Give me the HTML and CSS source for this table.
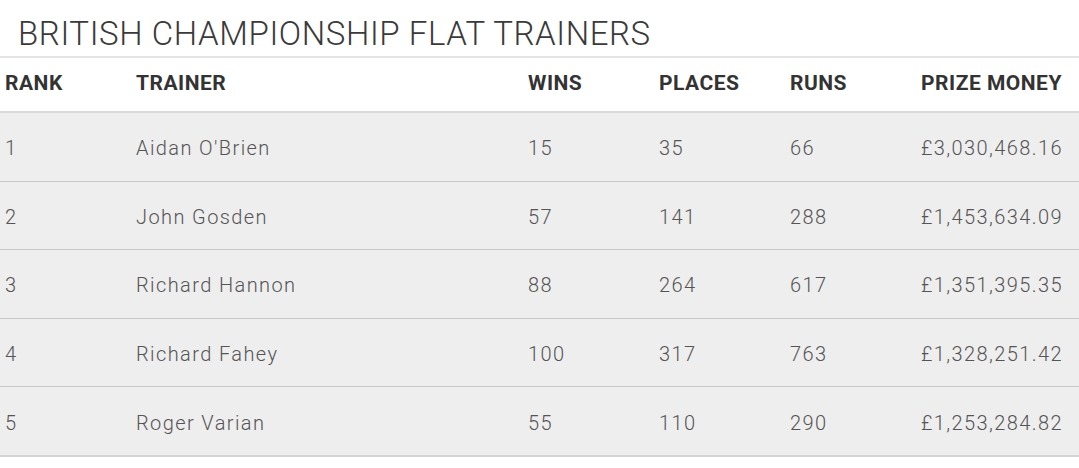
FILE: index.html
```html
<!DOCTYPE html>
<html>
<head>
<meta charset="utf-8">
<link rel="stylesheet" href="styles.css">
</head>
<body>
<h1 class="title">BRITISH CHAMPIONSHIP FLAT TRAINERS</h1>
<table class="standings">
  <colgroup>
    <col class="c-rank"><col class="c-trainer"><col class="c-num"><col class="c-num"><col class="c-num"><col class="c-prize">
  </colgroup>
  <thead>
    <tr><th>RANK</th><th>TRAINER</th><th>WINS</th><th>PLACES</th><th>RUNS</th><th>PRIZE MONEY</th></tr>
  </thead>
  <tbody>
    <tr><td>1</td><td>Aidan O'Brien</td><td>15</td><td>35</td><td>66</td><td>£3,030,468.16</td></tr>
    <tr><td>2</td><td>John Gosden</td><td>57</td><td>141</td><td>288</td><td>£1,453,634.09</td></tr>
    <tr><td>3</td><td>Richard Hannon</td><td>88</td><td>264</td><td>617</td><td>£1,351,395.35</td></tr>
    <tr><td>4</td><td>Richard Fahey</td><td>100</td><td>317</td><td>763</td><td>£1,328,251.42</td></tr>
    <tr><td>5</td><td>Roger Varian</td><td>55</td><td>110</td><td>290</td><td>£1,253,284.82</td></tr>
  </tbody>
</table>
</body>
</html>
```

FILE: styles.css
```css
html, body {
  margin: 0;
  padding: 0;
  background: #fff;
}
body {
  font-family: "Roboto", "Liberation Sans", sans-serif;
  color: #555;
}
.title {
  margin: 0;
  padding: 14px 0 0 18px;
  height: 42px;
  font-weight: 300;
  font-size: 33px;
  line-height: 40px;
  color: #3a3a3a;
  letter-spacing: 0.6px;
}
.standings {
  width: 1079px;
  border-collapse: collapse;
  table-layout: fixed;
}
.c-rank { width: 131px; }
.c-trainer { width: 392px; }
.c-num { width: 131px; }
.c-prize { width: 163px; }
.standings th {
  text-align: left;
  font-weight: 700;
  font-size: 21px;
  letter-spacing: 0.5px;
  color: #333;
  height: 49px;
  padding: 0 0 4px 5px;
  border-top: 2px solid #e4e4e4;
  border-bottom: 2px solid #dadada;
  background: #fff;
}
.standings td {
  font-size: 20px;
  font-weight: 300;
  letter-spacing: 1.4px;
  color: #555;
  height: 64.6px;
  padding: 3px 0 0 5px;
  background: #eeeeee;
  border-bottom: 1px solid #c8c8c8;
}
.standings tbody tr:last-child td {
  border-bottom: 2px solid #d4d4d4;
}
```
